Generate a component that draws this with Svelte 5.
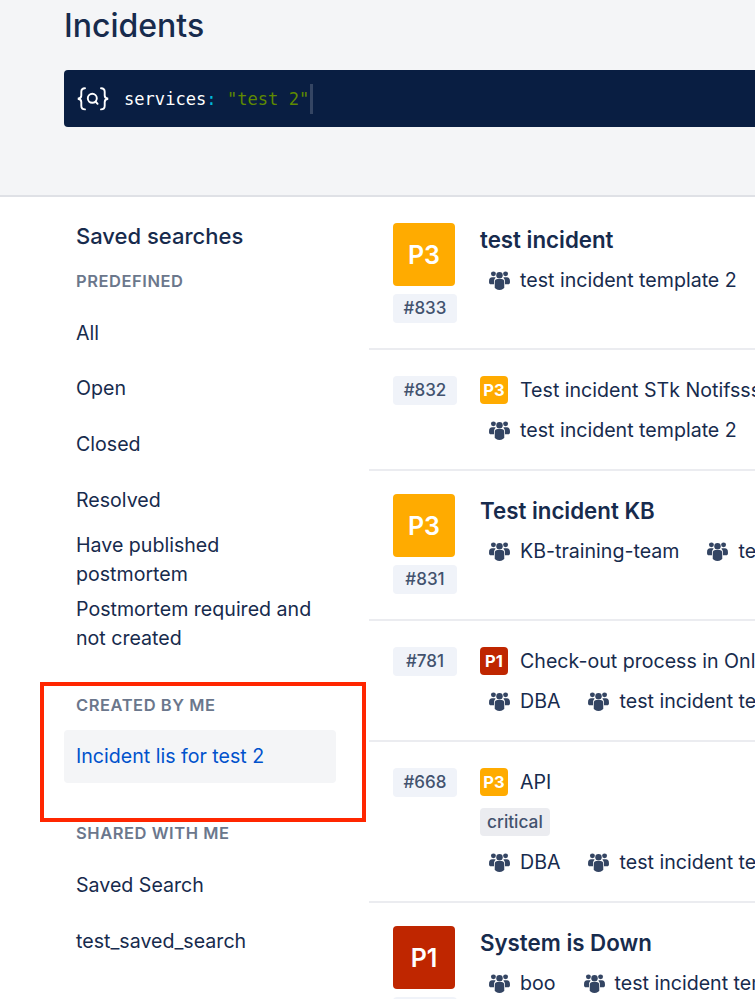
<script>
	const predefined = ['All', 'Open', 'Closed', 'Resolved'];
	const predefinedLong = ['Have published postmortem', 'Postmortem required and not created'];
	const shared = ['Saved Search', 'test_saved_search'];

	const incidents = [
		{ id: 833, p: 'P3', title: 'test incident', big: true, teams: ['test incident template 2'] },
		{ id: 832, p: 'P3', title: 'Test incident STk Notifssss', teams: ['test incident template 2'] },
		{ id: 831, p: 'P3', title: 'Test incident KB', big: true, teams: ['KB-training-team', 'test incident template 2'] },
		{ id: 781, p: 'P1', title: 'Check-out process in Online Store', teams: ['DBA', 'test incident template 2'] },
		{ id: 668, p: 'P3', title: 'API', tag: 'critical', teams: ['DBA', 'test incident template 2'] },
		{ id: 667, p: 'P1', title: 'System is Down', big: true, teams: ['boo', 'test incident template 2'] }
	];
</script>

{#snippet teamIcon()}
	<svg class="team-icon" viewBox="0 0 22 20" width="21" height="19" aria-hidden="true">
		<circle cx="4.600" cy="3" r="2.600" />
		<circle cx="17.400" cy="3" r="2.600" />
		<circle cx="11" cy="4.400" r="3.400" />
		<path d="M0 10.500C0 8 1.300 6.700 3.200 6.700h2.600c.4 0 .8.100 1.100.3-1 .9-1.600 2.200-1.700 3.700v3.200H2c-1.200 0-2-.8-2-1.900z" />
		<path d="M22 10.500C22 8 20.700 6.700 18.800 6.700h-2.600c-.4 0-.8.100-1.100.3 1 .9 1.600 2.200 1.700 3.700v3.200H20c1.200 0 2-.8 2-1.900z" />
		<path d="M6 11.300C6 9.400 7.300 8.500 8.800 8.500h4.400c1.500 0 2.800.9 2.800 2.800v5.900c0 1.500-2.200 2.800-5 2.800s-5-1.300-5-2.800z" />
	</svg>
{/snippet}

<div class="page">
	<header class="top">
		<h1>Incidents</h1>
		<div class="search">
			<svg class="search-icon" viewBox="0 0 32 24" width="32" height="24" aria-hidden="true">
				<path d="M8 1.200C5.200 1.200 4.300 2.200 4.300 4.800V8.600C4.300 10.500 2.900 11.600 .8 11.800 2.900 12 4.300 13.100 4.300 15V18.800C4.300 21.400 5.200 22.400 8 22.400" />
				<path d="M24 1.200C26.800 1.200 27.700 2.200 27.700 4.800V8.600C27.700 10.500 29.100 11.600 31.200 11.800 29.100 12 27.700 13.100 27.700 15V18.800C27.700 21.400 26.800 22.400 24 22.400" />
				<circle cx="15.300" cy="11.300" r="4.500" />
				<path d="M18.500 14.500 L20.600 16.800" />
			</svg>
			<code><span class="key">services</span><span class="colon">:</span> <span class="val">"test 2"</span></code>
			<span class="caret"></span>
		</div>
	</header>

	<div class="body">
		<aside>
			<h2>Saved searches</h2>
			<h3>PREDEFINED</h3>
			{#each predefined as item}
				<div class="item">{item}</div>
			{/each}
			{#each predefinedLong as item}
				<div class="item long">{item}</div>
			{/each}
			<h3 class="mine">CREATED BY ME</h3>
			<div class="item active">Incident lis for test 2</div>
			<h3 class="shared">SHARED WITH ME</h3>
			{#each shared as item}
				<div class="item">{item}</div>
			{/each}
		</aside>

		<main>
			{#each incidents as inc}
				<article class:big={inc.big} class:tagged={inc.tag}>
					<div class="side">
						{#if inc.big}
							<div class="prio-big {inc.p}">{inc.p}</div>
						{/if}
						<div class="num">#{inc.id}</div>
					</div>
					<div class="content">
						{#if inc.big}
							<div class="title-big">{inc.title}</div>
						{:else}
							<div class="title">
								<span class="prio {inc.p}">{inc.p}</span>
								<span>{inc.title}</span>
							</div>
						{/if}
						{#if inc.tag}
							<span class="tag">{inc.tag}</span>
						{/if}
						<div class="teams">
							{#each inc.teams as team}
								<span class="team">{@render teamIcon()}{team}</span>
							{/each}
						</div>
					</div>
				</article>
			{/each}
		</main>
	</div>

	<div class="highlight"></div>
</div>

<style>
	:global(body) {
		margin: 0;
		background: #fff;
		overflow: hidden;
	}

	.page {
		position: relative;
		width: 755px;
		height: 999px;
		overflow: hidden;
		font-family: Inter, 'Noto Sans', sans-serif;
		color: #172b4d;
		font-size: 19.600px;
	}

	.top {
		height: 195px;
		background: #f4f5f7;
		border-bottom: 2px solid #dfe1e6;
		padding: 0 0 0 64px;
	}

	h1 {
		margin: 0;
		padding-top: 7px;
		height: 70px;
		box-sizing: border-box;
		font-size: 32px;
		line-height: 38px;
		font-weight: 500;
	}

	.search {
		width: 800px;
		height: 57px;
		background: #091e42;
		border-radius: 4px;
		display: flex;
		align-items: center;
		padding-left: 13px;
		color: #fff;
	}

	.search-icon {
		flex: none;
		margin-right: 15px;
		margin-top: 1px;
		fill: none;
		stroke: #fff;
		stroke-width: 1.900;
		stroke-linecap: round;
	}

	code {
		font-family: 'DejaVu Sans Mono', monospace;
		font-size: 17.100px;
		white-space: pre;
	}

	.colon {
		color: #00b8d9;
	}

	.val {
		color: #5e8a00;
	}

	.caret {
		width: 3px;
		height: 30px;
		background: #344563;
		margin-left: 1px;
	}

	.body {
		display: flex;
	}

	aside {
		width: 272px;
		margin-left: 64px;
		margin-right: 33px;
		flex: none;
	}

	h2 {
		margin: 25px 0 0 12px;
		font-size: 22px;
		line-height: 28px;
		font-weight: 500;
	}

	h3 {
		margin: 21px 0 0 12px;
		font-size: 16.500px;
		line-height: 20px;
		font-weight: 600;
		color: #6b778c;
		letter-spacing: 0.55px;
	}

	.item {
		padding: 0 12px;
		height: 55.700px;
		line-height: 55.700px;
	}

	h3 + .item {
		margin-top: 14.500px;
	}

	.item.long {
		height: auto;
		line-height: 29px;
		padding-top: 3px;
		padding-bottom: 3px;
	}

	h3.mine {
		margin-top: 39px;
	}

	h3.mine + .item {
		margin-top: 15px;
	}

	.active {
		height: 53px;
		line-height: 53px;
		background: #f4f5f7;
		border-radius: 4px;
		color: #0052cc;
	}

	h3.shared {
		margin-top: 40px;
	}

	h3.shared + .item {
		margin-top: 15px;
	}

	main {
		flex: 1;
		min-width: 0;
	}

	article {
		display: flex;
		border-bottom: 2px solid #ebecf0;
		padding: 26px 0 0 24px;
		white-space: nowrap;
		height: 121px;
		box-sizing: border-box;
	}

	article.big {
		height: 150px;
		padding-top: 23px;
	}

	article.big:first-child {
		height: 153px;
		padding-top: 26px;
	}

	article.tagged {
		height: 161px;
	}

	.side {
		width: 87px;
		flex: none;
	}

	.prio-big {
		width: 62px;
		height: 63px;
		border-radius: 4px;
		display: flex;
		align-items: center;
		justify-content: center;
		font-size: 25px;
		font-weight: 600;
		color: #fff;
		margin-bottom: 8px;
	}

	.P3 {
		background: #ffab00;
	}

	.P1 {
		background: #bf2600;
	}

	.num {
		width: 64px;
		height: 28.500px;
		line-height: 28.500px;
		text-align: center;
		background: #f0f3f9;
		border-radius: 4px;
		font-size: 17px;
		font-weight: 500;
		color: #42526e;
	}

	.content {
		min-width: 0;
	}

	.title-big {
		font-size: 22.300px;
		font-weight: 600;
		line-height: 28px;
		margin-top: 3px;
	}

	.title {
		display: flex;
		align-items: center;
		gap: 12px;
		height: 28px;
	}

	.prio {
		flex: none;
		width: 28px;
		height: 28px;
		border-radius: 4px;
		display: flex;
		align-items: center;
		justify-content: center;
		font-size: 16.500px;
		font-weight: 700;
		color: #fff;
	}

	.tag {
		display: block;
		width: fit-content;
		margin-top: 12px;
		height: 28px;
		line-height: 28px;
		padding: 0 7px;
		background: #ebecf0;
		border-radius: 4px;
		font-size: 17.300px;
		font-weight: 500;
		color: #42526e;
	}

	.teams {
		display: flex;
		gap: 28px;
		padding-left: 9px;
		margin-top: 11.500px;
		height: 29px;
		align-items: center;
	}

	.team {
		display: flex;
		align-items: center;
		gap: 10px;
	}

	.team-icon {
		fill: #344563;
		flex: none;
	}

	.highlight {
		position: absolute;
		left: 40px;
		top: 682px;
		width: 326px;
		height: 140px;
		box-sizing: border-box;
		border: 4px solid #ff2600;
		pointer-events: none;
	}
</style>
